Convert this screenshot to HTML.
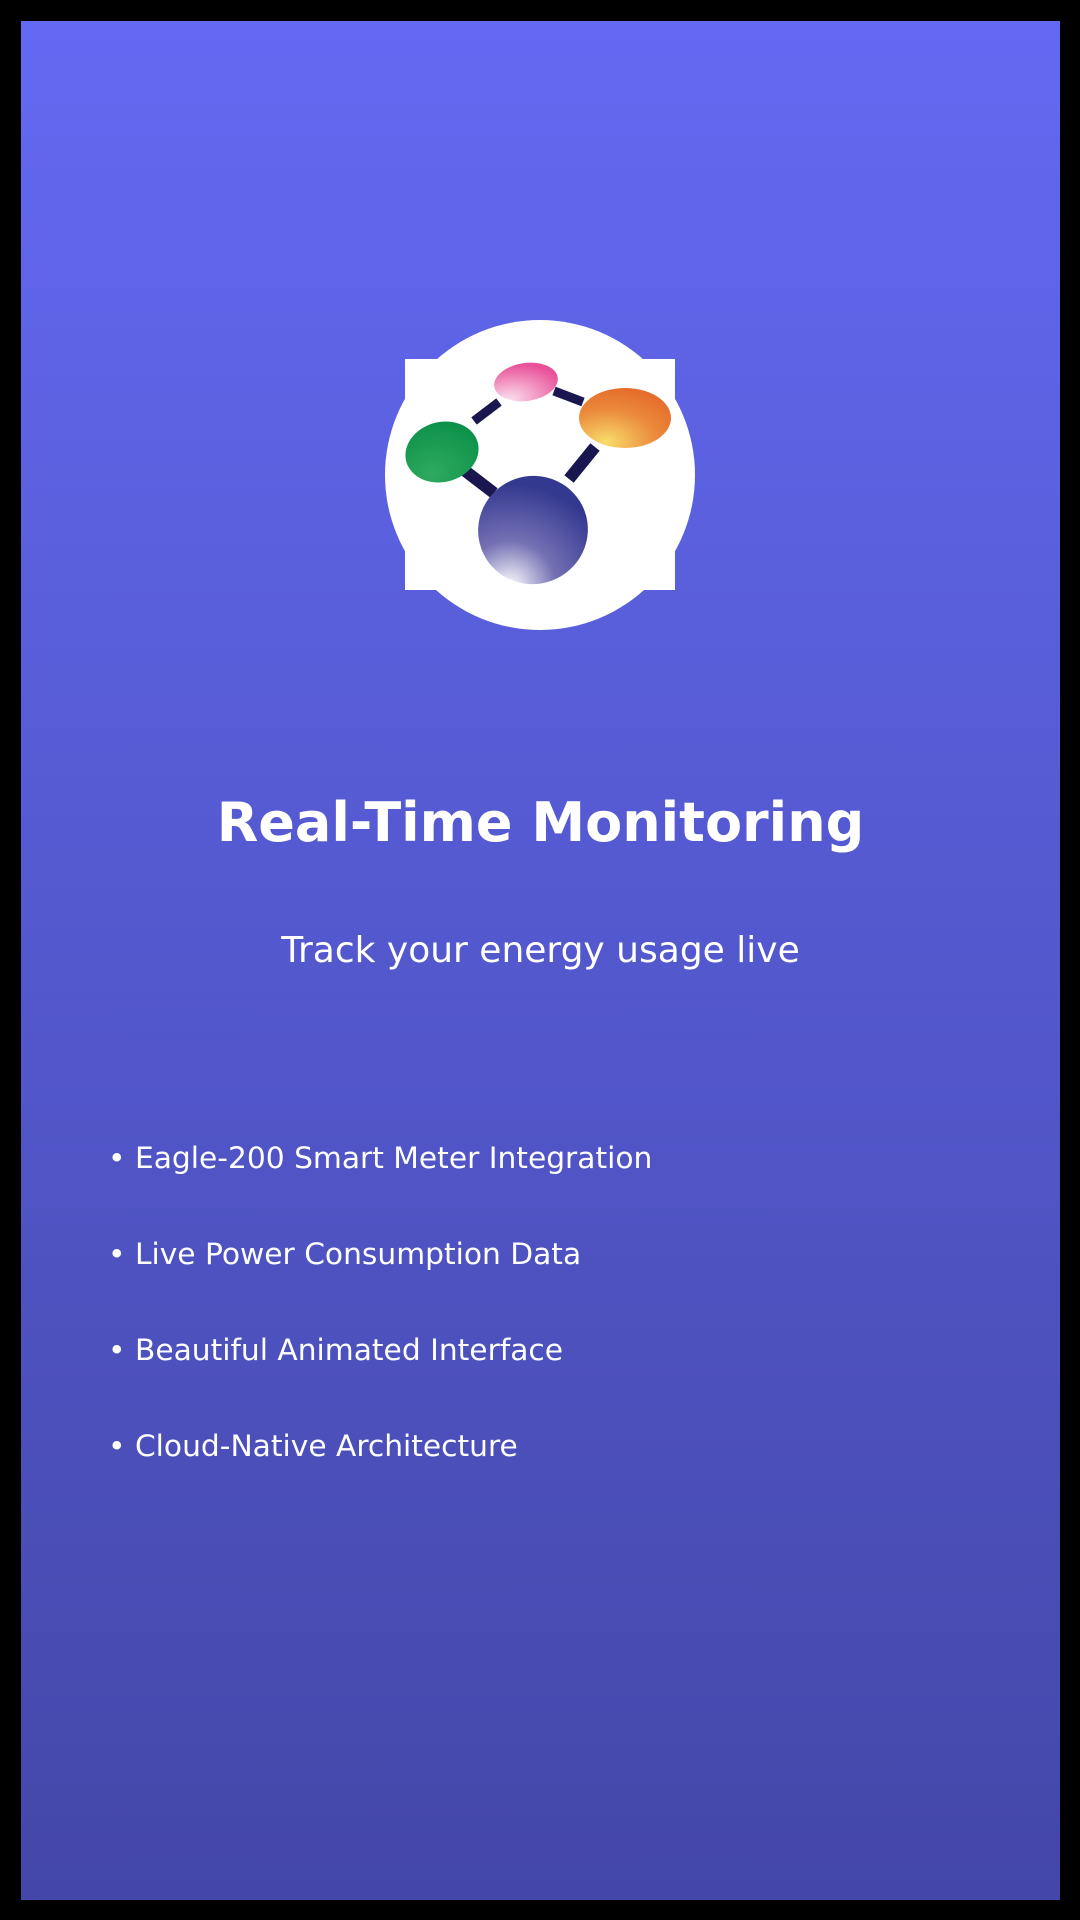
<!DOCTYPE html>
<html><head><meta charset="utf-8"><style>
html,body{margin:0;padding:0;width:1080px;height:1920px;background:#000;overflow:hidden}
.scr{position:absolute;left:21px;top:21px;width:1039px;height:1879px;background:linear-gradient(#6369f2,#4447a8);font-family:"DejaVu Sans","Liberation Sans",sans-serif;color:#fff}
.t{position:absolute;left:0;width:100%;text-align:center;top:760px;font-size:54px;font-weight:bold;line-height:84px}
.s{position:absolute;left:0;width:100%;text-align:center;top:907px;font-size:36px;line-height:46px}
.b{position:absolute;left:87px;font-size:29.7px;line-height:40px;white-space:nowrap}
</style></head><body>
<div class="scr">
<svg style="position:absolute;left:0;top:0" width="1039" height="1000" viewBox="21 21 1039 1000">
<defs>
<radialGradient id="gb" cx="0.12" cy="0.92" r="0.95"><stop offset="0" stop-color="#fff"/><stop offset="0.45" stop-color="#7470b4"/><stop offset="1" stop-color="#343990"/></radialGradient>
<radialGradient id="go" cx="0.3" cy="0.9" r="0.9"><stop offset="0" stop-color="#f8dc6a"/><stop offset="0.6" stop-color="#eb8a3c"/><stop offset="1" stop-color="#e56e2c"/></radialGradient>
<radialGradient id="gp" cx="0.2" cy="0.9" r="0.9"><stop offset="0" stop-color="#fbe0ee"/><stop offset="1" stop-color="#e9529a"/></radialGradient>
<radialGradient id="gg" cx="0.3" cy="0.8" r="0.9"><stop offset="0" stop-color="#2eaa5e"/><stop offset="1" stop-color="#0a8f48"/></radialGradient>
</defs>
<circle cx="540" cy="475" r="155" fill="#fff"/>
<rect x="405" y="359" width="270" height="231" fill="#fff"/>
<g stroke="#1a1650" stroke-linecap="butt">
<line x1="474" y1="421" x2="499" y2="402" stroke-width="9"/>
<line x1="554" y1="391" x2="583" y2="402" stroke-width="9"/>
<line x1="595" y1="447" x2="569" y2="479" stroke-width="12"/>
<line x1="464" y1="470" x2="494" y2="493" stroke-width="12"/>
</g>
<ellipse cx="526" cy="382" rx="32" ry="19" transform="rotate(-8 526 382)" fill="url(#gp)"/>
<ellipse cx="625" cy="418" rx="46" ry="30" fill="url(#go)"/>
<ellipse cx="442" cy="452" rx="37" ry="30" transform="rotate(-15 442 452)" fill="url(#gg)"/>
<ellipse cx="533" cy="530" rx="55" ry="54" transform="rotate(-20 533 530)" fill="url(#gb)"/>
</svg>
<div class="t">Real-Time Monitoring</div>
<div class="s">Track your energy usage live</div>
<div class="b" style="top:1118px">• Eagle-200 Smart Meter Integration</div>
<div class="b" style="top:1214px">• Live Power Consumption Data</div>
<div class="b" style="top:1310px">• Beautiful Animated Interface</div>
<div class="b" style="top:1406px">• Cloud-Native Architecture</div>
</div>
</body></html>
